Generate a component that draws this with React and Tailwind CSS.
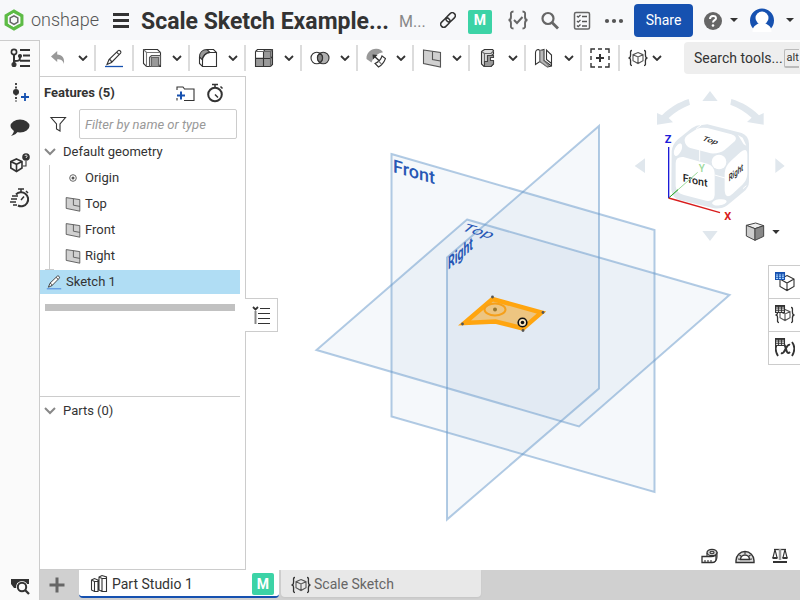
import React from "react";

const Svg = ({ w = 20, h = 20, box, children, className = "" }) => (
  <svg
    width={w}
    height={h}
    viewBox={box || `0 0 ${w} ${h}`}
    fill="none"
    stroke="#333"
    strokeWidth="1.1"
    className={`shrink-0 ${className}`}
    aria-hidden="true"
  >
    {children}
  </svg>
);

const Chevron = () => (
  <Svg w={10} h={6}>
    <path d="M1 1l4 4 4-4" strokeWidth="1.800" />
  </Svg>
);

const Caret = () => (
  <Svg w={8} h={4}>
    <path d="M0 0h8L4 4z" fill="#333" stroke="none" />
  </Svg>
);

const Logo = () => (
  <Svg w={20} h={22}>
    <path d="M10 2.200L17.800 6.600V15.400L10 19.800L2.200 15.400V6.600Z" stroke="#5dbb46" strokeWidth="3.300" />
    <path d="M10 6.800l3.800 2.100v4.200L10 15.300l-3.800-2.200V8.900z" stroke="#666" strokeWidth="1.500" />
    <path d="M4.500 7.500L10 4.300M15.800 8v6.500M4.500 14.500l5.500 3.200" stroke="#fff" strokeWidth="1" />
  </Svg>
);

const Undo = () => (
  <Svg>
    <path d="M3 8.500L9.200 3v3.500c5 .2 7.500 3 6.800 9.500-1-3.500-3-4.800-6.800-4.800V14z" fill="#999" stroke="none" />
  </Svg>
);

const Pencil = ({ size = 20, line = "#1651b0", fill = "none" }) => (
  <Svg w={size} h={size} box="0 0 20 20">
    <path d="M3 16.500l2-5L14.200 2.600c1.200-1 3.600 1.200 2.400 2.600L7.500 14.500zM5 11.500c1.500.2 2.500 1.400 2.500 3M12.600 4.200l2.700 2.600" fill={fill} />
    <path d="M1 18.500h18" stroke={line} strokeWidth="1.300" />
  </Svg>
);

const Extrude = () => (
  <Svg>
    <path d="M1.500 1.500h14l3 3v14h-14l-3-3z" fill="#fff" />
    <path d="M1.500 1.500l3 3h14M4.500 4.500v14" stroke="#777" />
    <path d="M7.500 9.500l2-2h9v9l-2 2h-9z" fill="#ccc" stroke="#555" />
    <path d="M9.500 9.500h7v9h-7z" fill="#999" stroke="#666" />
  </Svg>
);

const Fillet = () => (
  <Svg>
    <path d="M1.500 9C1.500 4.500 4.500 1.500 9 1.500l3 3C8 4.500 4.500 8 4.500 12z" fill="#999" />
    <path d="M9 1.500h6.500l3 3v14h-14l-3-3V9" />
    <path d="M4.500 18.500V12c0-4 3.500-7.500 7.500-7.500h6.500" />
  </Svg>
);

const Pattern = () => (
  <Svg>
    <path d="M1.500 3.500l2-2h15v15l-2 2h-15z" fill="#999" stroke="none" />
    <path d="M1.500 3.500l2-2H10v8H1.500z" fill="#fff" stroke="none" />
    <path d="M1.500 3.500l2-2h15v15l-2 2h-15zM1.500 10.500h15l2-2M9.500 3.500v15M9.500 3.500l1.500-2" />
    <path d="M1.500 3.500h15v15M16.500 3.500l2-2" stroke="#666" />
  </Svg>
);

const BooleanIcon = () => (
  <Svg>
    <circle cx="13.200" cy="10" r="5.800" fill="#b0b0b0" />
    <circle cx="6.800" cy="10" r="5.800" />
    <path d="M10 5.200a5.800 5.800 0 0 1 0 9.600a5.800 5.800 0 0 1 0-9.600z" fill="#858585" />
  </Svg>
);

const ReplaceFace = () => (
  <Svg>
    <path d="M.5 11C0 5 5 .5 10.500.8c3 .2 5.500 1.500 6.500 3.500-5 .7-9 4-11.500 10.200z" fill="#999" stroke="none" />
    <path d="M9 15.500c3.500-1.500 6-4 7-7.500l3.500 2.500c-1.500 4-3.500 6.500-7 8.500z" fill="#fff" />
    <path d="M12.500 13l3 3.200" stroke="#777" />
    <path d="M13 12.500L7.500 7.500" strokeWidth="1.500" />
    <path d="M6.500 6.500l5 .5-4.500 4.500z" fill="#333" stroke="none" />
  </Svg>
);

const PlaneIcon = ({ size = 20 }) => (
  <Svg w={size} h={size} box="0 0 20 20">
    <path d="M1.500 2l17 2.500v14.500L1.500 15.500z" fill="#d0d0d0" stroke="#555" />
    <path d="M10.500 3.500v8l8 1.500" stroke="#555" />
  </Svg>
);

const SheetMetal = () => (
  <Svg>
    <path d="M3.500 3.500l3-2h8l1 1v3.500l-2 1.500H9.500v6h6v2.500l-2.500 2.500H6l-2.500-2.500z" fill="#ddd" />
    <path d="M6.500 5.500l-3-2M6.500 5.500h6.500l2.500-2.500M6.500 5.500v13" stroke="#666" />
    <path d="M9.500 7.500h6v2h-3v3h3v3.500l-2.500 2.500H6.500v-5h3z" fill="#999" stroke="#444" />
  </Svg>
);

const Frame = () => (
  <Svg>
    <path d="M1.500 5c0-2 1-3.500 3-3.500l1.500 1v11l-4.500 3z" fill="#fff" />
    <path d="M6 2.500l4-1v11L17.500 18M6 13.500l7.500 5.500 4-1V7L12.500 2v9.500l5 4" />
    <path d="M6 2.500h3.500v10L15 17.500l-2 1.200L6 13.500z" fill="#bbb" stroke="#777" />
  </Svg>
);

const AddCustom = () => (
  <Svg>
    <path d="M1 5V1h4M8 1h4M15 1h4v4M19 8v4M19 15v4h-4M12 19H8M5 19H1v-4M1 12V8" strokeWidth="1.400" />
    <path d="M10 6v8M6 10h8" strokeWidth="2" />
  </Svg>
);

const BraceCube = ({ children }) => (
  <Svg>
    <path d="M4 2.500C1.500 2.500 3 5 2.500 7.500c0 1.500-.5 2.500-2 2.500 1.500 0 2 1 2 2.500.5 2.500-1 5 1.500 5M16 2.500c2.500 0 1 2.500 1.500 5 0 1.500.5 2.500 2 2.500-1.500 0-2 1-2 2.500-.5 2.500 1 5-1.500 5" strokeWidth="1.300" />
    <path d="M10 4.500l5 2.200v6L10 15.500l-5-2.800v-6zM5 6.700L10 9l5-2.300M10 9v6.500" stroke="#555" />
    {children}
  </Svg>
);

const TableGrid = ({ color, fill }) => (
  <g>
    <path d="M.5 .5h9v7h-9z" fill={fill} stroke={color} />
    <path d="M.5 1h9" stroke={color} strokeWidth="1.800" />
    <path d="M.5 3h9M.5 5.300h9M3.500 .5v7M6.500 .5v7" stroke={color} strokeWidth=".9" />
  </g>
);

const Tool = ({ label, icon }) => (
  <div className="flex h-[26px] w-14 shrink-0 items-center border-r-2 border-[#dcdcdc]">
    <button aria-label={label} className="ml-2 flex w-5 items-center justify-center">{icon}</button>
    <button aria-label={`${label} options`} className="ml-2.5 flex w-2.5 items-center justify-center"><Chevron /></button>
  </div>
);

const SingleTool = ({ label, icon }) => (
  <div className="flex h-[26px] w-[38px] shrink-0 items-center justify-center border-r-2 border-[#dcdcdc]">
    <button aria-label={label}>{icon}</button>
  </div>
);

function Header() {
  return (
    <header className="flex h-10 shrink-0 items-center bg-[#f7f8fa]">
      <a href="#home" className="ml-1 flex items-center" aria-label="onshape home">
        <Logo />
        <span className="ml-[7px] w-[71px] text-[18px] font-light leading-5 text-[#555]">onshape</span>
      </a>
      <button aria-label="Menu" className="ml-[11px] flex w-4 shrink-0 flex-col gap-[3px]">
        <span className="h-[3px] bg-[#333]" />
        <span className="h-[3px] bg-[#333]" />
        <span className="h-[3px] bg-[#333]" />
      </button>
      <h1 className="ml-3 w-[246px] shrink-0 whitespace-nowrap pt-[3px] text-[23px] font-bold leading-7">Scale Sketch Example...</h1>
      <span className="ml-3 w-[37px] shrink-0 pt-1 text-[16px] text-[#888]">M...</span>
      <button aria-label="Copy link" className="ml-1">
        <Svg w={16} h={16}>
          <g transform="rotate(-45 8 8)" strokeWidth="1.500">
            <rect x="-1" y="5" width="10.500" height="6" rx="3" />
            <rect x="6.500" y="5" width="10.500" height="6" rx="3" />
          </g>
        </Svg>
      </button>
      <button className="ml-3 mt-1 h-6 w-6 shrink-0 rounded-xs bg-[#3cd3a6] pb-1 text-[14px] font-bold leading-5 text-white">M</button>
      <div className="ml-4 flex shrink-0 items-center gap-3">
        <button aria-label="Feature check">
          <Svg>
            <path d="M5.500 1.500C2 1.500 3 4 3 6.500S2.500 10 .5 10C2.500 10 3 11 3 13.500s-1 5 2.500 5M14.500 1.500c3.500 0 2.500 2.500 2.500 5s.5 3.500 2.500 3.500c-2 0-2.500 1-2.500 3.500s1 5-2.500 5" stroke="#666" strokeWidth="1.900" />
            <path d="M6 10l3 3 5.500-6" stroke="#666" strokeWidth="2" />
          </Svg>
        </button>
        <button aria-label="Search">
          <Svg>
            <circle cx="8" cy="8.500" r="5.500" stroke="#666" strokeWidth="2.200" />
            <path d="M12 12.500l6 6" stroke="#666" strokeWidth="2.800" />
          </Svg>
        </button>
        <button aria-label="Tasks">
          <Svg>
            <rect x="2.500" y="2.500" width="15" height="16.500" rx="1.500" stroke="#666" strokeWidth="1.500" />
            <path d="M5 6l1.200 1.200L8.500 5M5 11l1.200 1.200L8.500 10M5 15.500l1.200 1.200L8.500 14.500M10 6.500h5M10 11.500h5M10 16h5" stroke="#555" strokeWidth="1.300" />
          </Svg>
        </button>
        <button aria-label="More">
          <Svg>
            <g fill="#555" stroke="none">
              <circle cx="3" cy="11" r="2.100" />
              <circle cx="10" cy="11" r="2.100" />
              <circle cx="17" cy="11" r="2.100" />
            </g>
          </Svg>
        </button>
      </div>
      <button className="ml-2.5 h-[33px] w-[59px] shrink-0 rounded-sm bg-[#1651b0] text-[14px] text-white">Share</button>
      <button aria-label="Help" className="ml-2.5 flex shrink-0 items-center gap-[7px]">
        <Svg>
          <circle cx="10" cy="11" r="9" fill="#666" stroke="none" />
          <path d="M7 9c0-4 6-4 6-.8 0 2-3 2-3 4.300" stroke="#fff" strokeWidth="2" />
          <circle cx="10" cy="15.500" r="1.300" fill="#fff" stroke="none" />
        </Svg>
        <Caret />
      </button>
      <button aria-label="Account" className="ml-3 flex shrink-0 items-center gap-3">
        <Svg w={24} h={24}>
          <path d="M3.500 21A12 12 0 1 1 20.500 21z" fill="#1651b0" stroke="none" />
          <circle cx="12" cy="10" r="6.500" fill="#fff" stroke="none" />
          <path d="M2.500 24c0-6 3.500-7 6.500-9h6c3 2 6.500 3 6.500 9z" fill="#fff" stroke="none" />
        </Svg>
        <Caret />
      </button>
    </header>
  );
}

function Rail() {
  return (
    <nav className="flex w-10 shrink-0 flex-col items-center gap-[15px] border-r border-t border-[#ccc] bg-[#fafafa] pt-[7px]" aria-label="Tools">
      <button aria-label="Versions" className="flex">
        <Svg>
          <circle cx="4" cy="4" r="2.600" strokeWidth="1.600" />
          <path d="M4 6.500v9M4 13c5 0 6 0 6-4" strokeWidth="2" />
          <circle cx="4" cy="16.500" r="2" fill="#333" />
          <circle cx="10" cy="8" r="1.500" fill="#333" />
          <path d="M10 2h10M13 7.500h7M10 12.800h10M10 18h10" strokeWidth="2" />
        </Svg>
      </button>
      <button aria-label="Add item" className="flex">
        <Svg>
          <path d="M6 0v18.500" strokeDasharray="2 1.500" strokeWidth="1.800" />
          <circle cx="6" cy="9" r="3" fill="#333" stroke="none" />
          <path d="M15 10v8M11 14h8" stroke="#1651b0" strokeWidth="1.800" />
        </Svg>
      </button>
      <button aria-label="Comments" className="flex">
        <Svg>
          <ellipse cx="10" cy="8" rx="9.500" ry="6.500" fill="#333" stroke="none" />
          <path d="M4 12c0 2-1 4-3 6 4-1 6-3 7-5z" fill="#333" stroke="none" />
        </Svg>
      </button>
      <button aria-label="Part help" className="flex">
        <Svg>
          <path d="M6.500 6l5.500 2.500v6.500L6.500 18.500.8 15V8.500zM.8 8.500l5.700 2.800L12 8.500M6.500 11.300v7" strokeWidth="1.600" />
          <circle cx="16" cy="4" r="3.800" fill="#333" stroke="none" />
          <path d="M14.800 3c.4-1.500 2.600-1 2.300.3-.2.700-1 .7-1 1.700" stroke="#fff" strokeWidth=".9" />
          <path d="M16 8v5h-3" />
        </Svg>
      </button>
      <button aria-label="Performance" className="flex">
        <Svg>
          <path d="M6 6.500A7 7 0 1 1 8 17.500" strokeWidth="2" />
          <path d="M8 1h6M11 1v3M16 3l2 2M2 8h6M1 11h6M0 14h6M3 17h4M11 12l3-3.500" strokeWidth="1.500" />
        </Svg>
      </button>
      <button aria-label="Inspect" className="mb-1 mt-auto flex">
        <Svg>
          <path d="M1 3h18v5h-3v-1H7v5H4L1 8z" fill="#333" stroke="none" />
          <circle cx="12" cy="11" r="6" fill="#fafafa" stroke="none" />
          <circle cx="12" cy="11" r="4.200" fill="#fafafa" strokeWidth="2" />
          <path d="M15 14l4 4" strokeWidth="2.300" />
        </Svg>
      </button>
    </nav>
  );
}

function Toolbar() {
  return (
    <div className="flex h-9 shrink-0 items-center bg-white" role="toolbar">
      <Tool label="Undo" icon={<Undo />} />
      <SingleTool label="Sketch" icon={<Pencil />} />
      <Tool label="Extrude" icon={<Extrude />} />
      <Tool label="Fillet" icon={<Fillet />} />
      <Tool label="Pattern" icon={<Pattern />} />
      <Tool label="Boolean" icon={<BooleanIcon />} />
      <Tool label="Replace face" icon={<ReplaceFace />} />
      <Tool label="Plane" icon={<PlaneIcon />} />
      <Tool label="Sheet metal" icon={<SheetMetal />} />
      <Tool label="Frame" icon={<Frame />} />
      <SingleTool label="Add custom features" icon={<AddCustom />} />
      <button aria-label="Custom features" className="ml-2 flex shrink-0 items-center gap-1">
        <BraceCube />
        <Chevron />
      </button>
      <button className="ml-[22px] flex h-8 min-w-0 flex-1 items-center gap-px whitespace-nowrap rounded-l-sm bg-[#eee] pl-2.5 text-[14px]">
        Search tools...
        <kbd className="rounded-l-xs border border-b-2 border-r-0 border-[#bbb] pl-0.5 font-[Roboto,sans-serif] text-[11px] leading-4">alt</kbd>
      </button>
    </div>
  );
}

const TreeChevron = () => (
  <Svg w={12} h={8}>
    <path d="M1 1l5 5 5-5" stroke="#888" strokeWidth="2" />
  </Svg>
);

function FeaturePanel() {
  return (
    <aside className="relative flex w-[206px] shrink-0 flex-col border-b border-r border-t border-[#ccc] bg-white text-[13px]">
      <div className="flex h-8 items-center pl-1">
        <h2 className="font-bold">Features (5)</h2>
        <button aria-label="Add folder" className="ml-auto mr-2.5">
          <Svg>
            <path d="M2 7V4h6l1.500 2H19v11.500H9M2 15v2.500" />
            <path d="M6 8.500v8M2 12.500h8" stroke="#1651b0" strokeWidth="2" />
          </Svg>
        </button>
        <button aria-label="Regeneration times" className="mr-5">
          <Svg>
            <circle cx="10" cy="11.500" r="6.800" strokeWidth="2" />
            <path d="M7 1.500h6M10 1.500v3M15.500 3.500l2 2M10 11.500l3 3" strokeWidth="1.500" />
          </Svg>
        </button>
      </div>
      <div className="flex h-[30px] items-center">
        <Svg className="ml-2">
          <path d="M3 3.500h14.500L12 10v7l-3.500-2v-5z" />
        </Svg>
        <input
          aria-label="Filter features"
          placeholder="Filter by name or type"
          className="ml-[11px] mr-2 h-[30px] min-w-0 flex-1 rounded-xs border border-[#ccc] px-[5px] italic text-[#333] placeholder:text-[#999]"
        />
      </div>
      <button className="flex h-[26px] items-center gap-[7px] pl-1"><TreeChevron />Default geometry</button>
      <div className="relative">
        <span className="absolute left-[9px] top-0 h-[104px] w-px bg-[#ccc]" />
        <span className="absolute -bottom-px left-[5px] h-px w-[9px] bg-[#ccc]" />
        <ul>
          <li className="flex h-[26px] items-center gap-2 pl-[29px]">
            <Svg w={8} h={8}>
              <circle cx="4" cy="4" r="3.300" stroke="#666" strokeWidth="1" />
              <circle cx="4" cy="4" r="1.500" fill="#555" stroke="none" />
            </Svg>
            Origin
          </li>
          {["Top", "Front", "Right"].map((name) => (
            <li key={name} className="flex h-[26px] items-center gap-1 pl-[25px]"><PlaneIcon size={16} />{name}</li>
          ))}
        </ul>
      </div>
      <button className="mr-[5px] mt-px flex h-6 items-center gap-1 bg-[#b0ddf4] pl-[6px]">
        <Pencil size={16} line="#4a86dd" fill="#fff" />Sketch 1
      </button>
      <div className="ml-[5px] mr-2.5 mt-2.5 h-[7px] shrink-0 bg-[#c1c1c1]" />
      <div className="mr-[5px] mt-[85px] border-t border-[#ccc] pt-px">
        <button className="flex h-[26px] items-center gap-[7px] pl-1"><TreeChevron />Parts (0)</button>
      </div>
      <button aria-label="Feature list" className="absolute -right-[33px] top-[221px] z-10 flex h-[34px] w-[33px] items-center justify-center border border-l-0 border-[#ccc] bg-white">
        <Svg>
          <path d="M2 2l2.500 2.500L7 2" strokeWidth="1.800" />
          <path d="M4.500 6v13" stroke="#888" strokeWidth="2" />
          <path d="M9 3.500h10M7 8.500h12M7 13.500h12M7 18.500h12" />
        </Svg>
      </button>
    </aside>
  );
}

function Scene() {
  return (
    <svg viewBox="246 76 554 494" className="h-full w-full" role="img" aria-label="Model view">
      <g fill="#487fae" fillOpacity=".053" stroke="none">
        <path d="M391.500 154L654.500 230V492L391.500 416.500z" />
        <path d="M467 219.500L729.500 295L579 426.500L316.500 350z" />
        <path d="M447 257.500L599 126V388.500L447 519.500z" />
      </g>
      <g fill="none" stroke="#6698ca" strokeOpacity=".5" strokeWidth="2">
        <path d="M391.500 154L654.500 230V492L391.500 416.500z" />
        <path d="M467 219.500L729.500 295L579 426.500L316.500 350z" />
        <path d="M447 257.500L599 126V388.500L447 519.500z" />
      </g>
      <g fill="#2757b5" fontFamily="Roboto, sans-serif" fontWeight="500" fontSize="18">
        <text transform="matrix(1 .29 0 1 393 172)">Front</text>
        <text transform="matrix(1 .29 -.57 .5 460 230)" fontWeight="400">Top</text>
        <text transform="matrix(.58 -.5 0 1 448 270)" fontWeight="700">Right</text>
      </g>
      <path d="M464.500 323L492.500 299L541.500 312.500L523 328.500L495.500 321.500z" fill="#f5a623" fillOpacity=".55" stroke="#ffa50f" strokeWidth="4.500" />
      <ellipse cx="495" cy="309.500" rx="10.500" ry="6" fill="none" stroke="#f6a01a" strokeWidth="2" />
      <circle cx="495" cy="309.500" r="2" fill="#96752e" />
      <circle cx="522.500" cy="322.500" r="4.300" fill="#fbe6be" stroke="#111" strokeWidth="1.600" />
      <circle cx="522.500" cy="322.500" r="1.800" fill="#111" />
      <g fill="#555">
        <circle cx="462.500" cy="324" r="1.400" />
        <circle cx="492.500" cy="297" r="1.400" />
        <circle cx="543" cy="312.500" r="1.400" />
        <circle cx="523" cy="330.500" r="1.400" />
      </g>
    </svg>
  );
}

function ViewCube() {
  return (
    <svg width="180" height="170" viewBox="0 0 540 510" className="absolute right-0 top-[9px]" role="img" aria-label="View cube">
      <g fill="#e0e7ed">
        <path d="M270 18l23 30h-46zM270 468l-23-30h46zM44 243l31-23v44zM494 243l-28-23v44z" />
        <path d="M206 42l4 17c-25 10-46 23-64 40l13 13-48 7V84l15 7c23-23 49-39 80-49zM334 42l-3 17c25 9 45 22 64 39l-14 13 50 8V84l-14 7c-23-23-50-39-83-49z" />
        <path d="M155 198Q158 177 174 163L215 130Q230 119 246 120L262 118L365 144Q386 152 387 176V290Q387 307 370 321L322 361Q305 373 281 370L180 345Q157 339 154 315z" />
      </g>
      <g fill="#fff">
        <path d="M194 167Q192 157 208 146L230 132Q243 126 262 129L334 148Q354 155 345 168L314 195Q298 207 272 205L211 189Q196 184 194 167z" />
        <path d="M167 235Q167 214 190 216L262 236Q284 243 284 265V330Q282 352 258 347L192 330Q169 325 167 304z" />
        <path d="M314 265Q315 244 333 227L361 202Q382 185 382 209V267Q381 287 367 299L338 326Q316 345 314 316z" />
        <circle cx="297" cy="231" r="22" />
        <ellipse cx="174" cy="194" rx="10" ry="20" transform="rotate(25 174 194)" />
        <ellipse cx="298" cy="352" rx="22" ry="9" transform="rotate(-8 298 352)" />
        <path d="M354 150l14 8 11 24-8-4z" />
      </g>
      <path d="M239 195v32M284 270l31 9M229 131l16-12M369 311l10-9" stroke="#fff" strokeWidth="3" />
      <g fontFamily="Roboto, sans-serif" fontWeight="500" fontSize="30" fill="#222">
        <text transform="matrix(1 .22 0 1 188 289)" fontSize="32">Front</text>
        <text transform="matrix(1 .29 -.57 .6 244 165)" fontSize="27">Top</text>
        <text transform="matrix(.62 -.5 0 1 326 290)">Right</text>
        <text x="236" y="260" fill="#9ad99a">Y</text>
        <text x="134" y="173" fill="#1c1cd8" fontWeight="700" fontSize="33">Z</text>
        <text x="313" y="404" fill="#d81c1c" fontWeight="700" fontSize="33">X</text>
      </g>
      <path d="M146 339L233 262" stroke="#9ad99a" strokeWidth="3" />
      <path d="M146 339L174 314" stroke="#28a428" strokeWidth="3" />
      <path d="M146 339V186" stroke="#1c1cd8" strokeWidth="4" />
      <path d="M146 339L300 383" stroke="#d81c1c" strokeWidth="4" />
      <g stroke="#444" strokeWidth="3">
        <path d="M379 421l28-7 24 8-26 9z" fill="#eee" />
        <path d="M379 421l26 10v35l-26-13z" fill="#ccc" />
        <path d="M431 422l-26 9v35l26-12z" fill="#888" />
      </g>
      <path d="M457 435h22l-11 12z" fill="#333" />
    </svg>
  );
}

function TableTabs() {
  const item = "flex h-[33px] w-[31px] items-center justify-center border-b border-[#ccc]";
  return (
    <div className="absolute right-0 top-[189px] border-l border-t border-[#ccc] bg-white">
      <button aria-label="Configurations" className={item}>
        <Svg>
          <path d="M12 3.500l7 3.500v7.500L12 18.500l-7-4V7zM5 7l7 4 7-4M12 11v7.500" />
          <TableGrid color="#1651b0" fill="#a9d6ff" />
        </Svg>
      </button>
      <button aria-label="Custom tables" className={item}>
        <BraceCube><TableGrid color="#333" fill="#ddd" /></BraceCube>
      </button>
      <button aria-label="Variables" className={item}>
        <Svg>
          <path d="M3 4c-3 4-3 9 0 14M17 4c3 4 3 9 0 14" strokeWidth="1.800" />
          <path d="M6 7c3-2 4 0 5 4s2 5 4 3M15 7c-2-1-4 3-5 5s-2 4-4 3" strokeWidth="2" />
          <TableGrid color="#333" fill="#ddd" />
        </Svg>
      </button>
    </div>
  );
}

function MeasureTools() {
  return (
    <div className="absolute bottom-1 right-[10px] flex gap-[15px]">
      <button aria-label="Measure">
        <Svg>
          <path d="M2 10.500h9c3 0 5-1 5-3V13c0 2-1 3.500-4 3.500H2z" fill="#fff" strokeWidth="1.300" />
          <path d="M7 10.500v-3.500M17 6v5c0 3-2 5.500-5 5.500" />
          <ellipse cx="12" cy="6.500" rx="5" ry="3.200" fill="#ccc" strokeWidth="1.300" />
          <ellipse cx="12" cy="6.500" rx="2" ry="1.200" />
          <path d="M5 16v-2M8 16v-2M11 16v-2" />
        </Svg>
      </button>
      <button aria-label="Protractor">
        <Svg>
          <path d="M1 16.500v-2a9 9 0 0 1 18 0v2z" fill="#ddd" strokeWidth="1.400" />
          <path d="M5.500 13.500a4.500 4.500 0 0 1 9 0z" fill="#fff" strokeWidth="1.400" />
          <path d="M3 13l2 .3M4.500 9l1.600 1.200M10 6v2M15.500 9l-1.600 1.200M17 13l-2 .3" />
        </Svg>
      </button>
      <button aria-label="Mass properties">
        <Svg>
          <path d="M4 3.500h12" strokeWidth="1.300" />
          <path d="M10 3v11" stroke="#999" strokeWidth="2.500" />
          <path d="M5 3.500l-2 8h4zM15 3.500l-2 8h4z" />
          <path d="M2.500 12h5M12.500 12h5M3 16h14" strokeWidth="2" />
        </Svg>
      </button>
    </div>
  );
}

function TabBar() {
  return (
    <footer className="flex h-[30px] shrink-0 items-start bg-[#d0d0d0] text-[14px]">
      <button aria-label="Add tab" className="flex h-[30px] w-[39px] items-center justify-center pr-[6px]">
        <Svg w={16} h={16}><path d="M8 .5v15M.5 8h15" stroke="#666" strokeWidth="3" /></Svg>
      </button>
      <button className="flex h-7 w-[200px] items-center rounded-b-sm border-b-2 border-[#1651b0] bg-white pl-2.5 pr-[5px] pt-0.5">
        <Svg>
          <path d="M2.500 6l3-1.500L9 6v11.500H5.500L2.500 16zM2.500 6l3 1.500H9M5.500 7.500v10M10 3l3-1.500L17.500 3v14.500H13L10 16zM10 3l3 1.500h4.500M13 4.500v13" />
        </Svg>
        <span className="ml-[3px]">Part Studio 1</span>
        <span className="ml-auto h-[22px] w-[22px] rounded-xs bg-[#3cd3a6] text-center font-bold leading-[22px] text-white">M</span>
      </button>
      <button className="ml-[2px] flex h-[27px] w-[200px] items-center gap-[3px] rounded-b-sm bg-[#e8e8e8] pl-2.5 pt-0.5 text-[#666] shadow-xs">
        <BraceCube />
        Scale Sketch
      </button>
    </footer>
  );
}

export default function App() {
  return (
    <div className="flex h-screen flex-col overflow-hidden bg-white font-[Roboto,'Noto_Sans',sans-serif] text-[#333]">
      <Header />
      <div className="flex min-h-0 flex-1">
        <Rail />
        <div className="flex min-w-0 flex-1 flex-col">
          <Toolbar />
          <div className="flex min-h-0 flex-1">
            <FeaturePanel />
            <main className="relative min-w-0 flex-1">
              <Scene />
              <ViewCube />
              <TableTabs />
              <MeasureTools />
            </main>
          </div>
          <TabBar />
        </div>
      </div>
    </div>
  );
}
